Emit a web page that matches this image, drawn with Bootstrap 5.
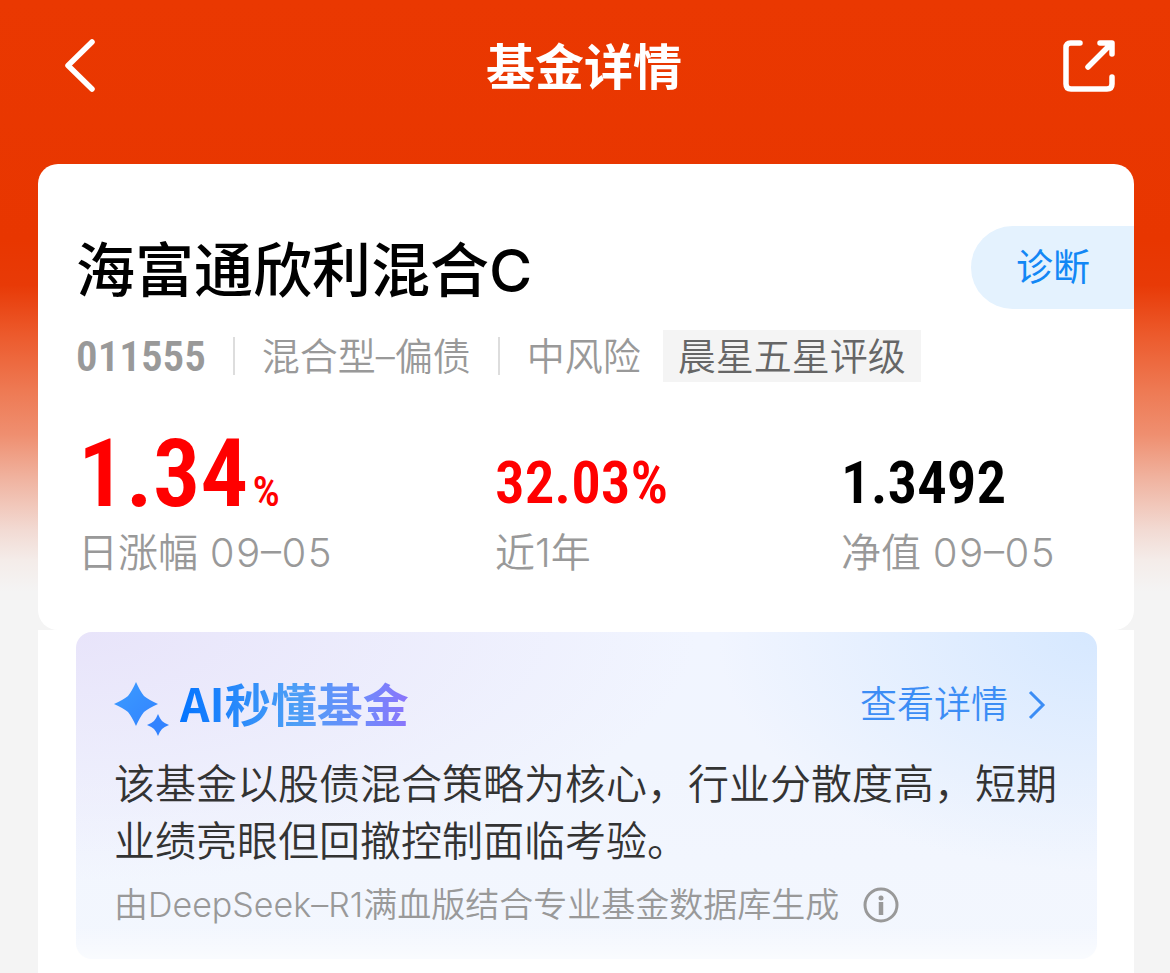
<!DOCTYPE html>
<html lang="zh-CN">
<head>
<meta charset="utf-8">
<meta name="viewport" content="width=device-width, initial-scale=1">
<title>基金详情</title>
<link href="https://cdn.jsdelivr.net/npm/bootstrap@5.3.0/dist/css/bootstrap.min.css" rel="stylesheet">
<style>
body {
  font-family: Inter, "Noto Sans CJK SC", sans-serif;
  color: #000;
  background: #f4f4f4 linear-gradient(#ea3801 0, #e83600 240px, #e83a07 285px, #ec5a2c 335px, #ee7953 390px, #ef8f70 435px, #f0b4a1 480px, #f2dad3 530px, #f4ece9 560px, #f4f4f4 592px) no-repeat 0 0 / 100% 600px;
}
.topbar { height: 132px; padding: 0 54px 0 64px; }
.topbar-title { font-size: 49px; line-height: 72px; font-weight: 700; padding: 4px 0 0 10px; }
.icon-btn { line-height: 0; }
.sheet { margin: 32px 36px 0 38px; }
.sheet-corners { background: linear-gradient(transparent 50%, #f4f4f4 50%); }
.fund { border-radius: 20px; padding: 62px 0 49px 38px; }
.fund-name { font-size: 59px; line-height: 90px; font-weight: 500; }
.diagnose {
  width: 163px; height: 83px; padding: 0 0 0 1px; border: 0;
  border-radius: 42px 0 0 42px; background: #e4f2fe; color: #1287f5;
  font-size: 37px; line-height: 80px;
}
.digits { font-family: "Roboto Condensed", Roboto, sans-serif; font-weight: 600; }
.meta-row { margin-top: 14px; font-size: 38px; line-height: 52px; font-weight: 350; color: #999; }
.meta-code { font-size: 43px; }
.meta-split { width: 2px; height: 38px; background: #ddd; margin: 0 27px; }
.rating { margin-left: 22px; padding: 0 15px; background: #f4f4f4; color: #666; }
.metrics { grid-template-columns: 417fr 346fr 253fr; margin: 38px 40px 0 2px; }
.metric-value { height: 105px; line-height: 126px; font-size: 59px; }
.metric-main { font-size: 95px; line-height: 108px; }
.metric-unit { font-size: 43px; margin-left: 4px; font-weight: 500; }
.metric-label { font-size: 40px; line-height: 56px; font-weight: 350; color: #999; }
.metric-label time { font-variant-numeric: tabular-nums; }
.rise { color: #f00; }
.ai-wrap { padding: 2px 37px 16px 38px; }
.ai-panel {
  border-radius: 16px; padding: 40px 38px 30px;
  background:
    linear-gradient(transparent 90%, #fff8 100%),
    radial-gradient(ellipse 380px 240px at 100% 0, #d6e8ff 0, #d6e8ff00 100%),
    radial-gradient(ellipse 620px 250px at 0 0, #e8e4fa 0, #e8e4fa00 100%),
    linear-gradient(#f1f5ff, #f1f5fe 40%, #f3f7fe);
}
.ai-spark { margin-top: 8px; }
.ai-title {
  font-size: 46px; line-height: 60px; padding-bottom: 6px; font-weight: 700;
  background: linear-gradient(90deg, #0474ff, #4d9ff6 50%, #6c8cfb 78%, #8b74fb);
  -webkit-background-clip: text; background-clip: text; color: transparent;
  font-family: "Noto Sans CJK SC", sans-serif;
}
.ai-more { font-size: 37px; line-height: 56px; font-weight: 350; color: #3c8df5; gap: 20px; margin-right: 13px; }
.ai-text { font-size: 41px; line-height: 57px; color: #333; margin-top: 18px; margin-right: -8px; font-weight: 350; }
.ai-source { font-size: 34px; line-height: 48px; color: #999; margin-top: 11px; font-weight: 350; gap: 24px; }
</style>
</head>
<body>
<div class="d-flex flex-column min-vh-100">
  <header class="topbar d-flex align-items-center justify-content-between text-white">
    <button type="button" class="icon-btn btn p-0 border-0 text-white" aria-label="返回">
      <svg width="32" height="54" viewBox="0 0 32 54" fill="none" stroke="currentColor" stroke-width="5.500" stroke-linecap="round" stroke-linejoin="round"><path d="M28 3 4 26.500 28 50"/></svg>
    </button>
    <h1 class="topbar-title mb-0">基金详情</h1>
    <button type="button" class="icon-btn btn p-0 border-0 text-white" aria-label="分享">
      <svg width="54" height="54" viewBox="0 0 54 54" fill="none" stroke="currentColor" stroke-width="5.500" stroke-linecap="round" stroke-linejoin="round"><path d="M18 4H8.500Q4 4 4 8.500V45Q4 50 9 50H45Q50 50 50 45V38M38 4H50V15M45 4.500H50V9M48 6 26 28"/></svg>
    </button>
  </header>

  <main class="sheet d-flex flex-column flex-grow-1">
    <div class="sheet-corners">
    <section class="fund bg-white">
      <div class="d-flex align-items-start justify-content-between">
        <h2 class="fund-name m-0">海富通欣利混合C</h2>
        <button type="button" class="diagnose">诊断</button>
      </div>
      <div class="meta-row d-flex align-items-center">
        <span class="meta-code digits">011555</span>
        <span class="meta-split"></span>
        <span>混合型–偏债</span>
        <span class="meta-split"></span>
        <span>中风险</span>
        <span class="rating">晨星五星评级</span>
      </div>
      <div class="metrics d-grid">
        <div>
          <div class="metric-value metric-main digits rise">1.34<span class="metric-unit">%</span></div>
          <div class="metric-label">日涨幅 <time>09–05</time></div>
        </div>
        <div>
          <div class="metric-value digits rise">32.03%</div>
          <div class="metric-label">近1年</div>
        </div>
        <div>
          <div class="metric-value digits">1.3492</div>
          <div class="metric-label text-nowrap">净值 <time>09–05</time></div>
        </div>
      </div>
    </section>
    </div>

    <div class="ai-wrap bg-white flex-grow-1">
      <section class="ai-panel">
        <div class="d-flex align-items-center justify-content-between">
          <div class="d-flex align-items-center">
            <svg class="ai-spark me-2" width="58" height="56" viewBox="0 0 58 56" aria-hidden="true">
              <defs><linearGradient id="spark" x1="0" y1="0" x2="1" y2="1"><stop offset="0" stop-color="#3b9cff"/><stop offset="1" stop-color="#3383ff"/></linearGradient></defs>
              <path fill="url(#spark)" d="M22 1Q26 10 30 15 35 19 44 23 35 27 30 31 26 36 22 45 18 36 14 31 9 27 0 23 9 19 14 15 18 10 22 1Z"/>
              <path fill="#3383ff" d="M44 33Q46 38 48 40 50 42 55 44 50 46 48 48 46 50 44 55 42 50 40 48 38 46 33 44 38 42 40 40 42 38 44 33Z"/>
            </svg>
            <h3 class="ai-title mb-0">AI秒懂基金</h3>
          </div>
          <a href="#" class="ai-more d-flex align-items-center text-decoration-none">查看详情
            <svg width="18" height="30" viewBox="0 0 18 30" fill="none" stroke="currentColor" stroke-width="3"><path d="M2 2 15 15 2 28"/></svg>
          </a>
        </div>
        <p class="ai-text mb-0">该基金以股债混合策略为核心，行业分散度高，短期业绩亮眼但回撤控制面临考验。</p>
        <div class="ai-source d-flex align-items-center">
          <span>由DeepSeek–R1满血版结合专业基金数据库生成</span>
          <svg width="36" height="36" viewBox="0 0 36 36" aria-hidden="true"><circle cx="18" cy="18" r="16" fill="none" stroke="#999" stroke-width="3"/><circle cx="18" cy="11" r="2.500" fill="#999"/><path d="M18 15V28" stroke="#999" stroke-width="4.500"/></svg>
        </div>
      </section>
    </div>
  </main>
</div>
<script src="https://cdn.jsdelivr.net/npm/bootstrap@5.3.0/dist/js/bootstrap.bundle.min.js"></script>
</body>
</html>
